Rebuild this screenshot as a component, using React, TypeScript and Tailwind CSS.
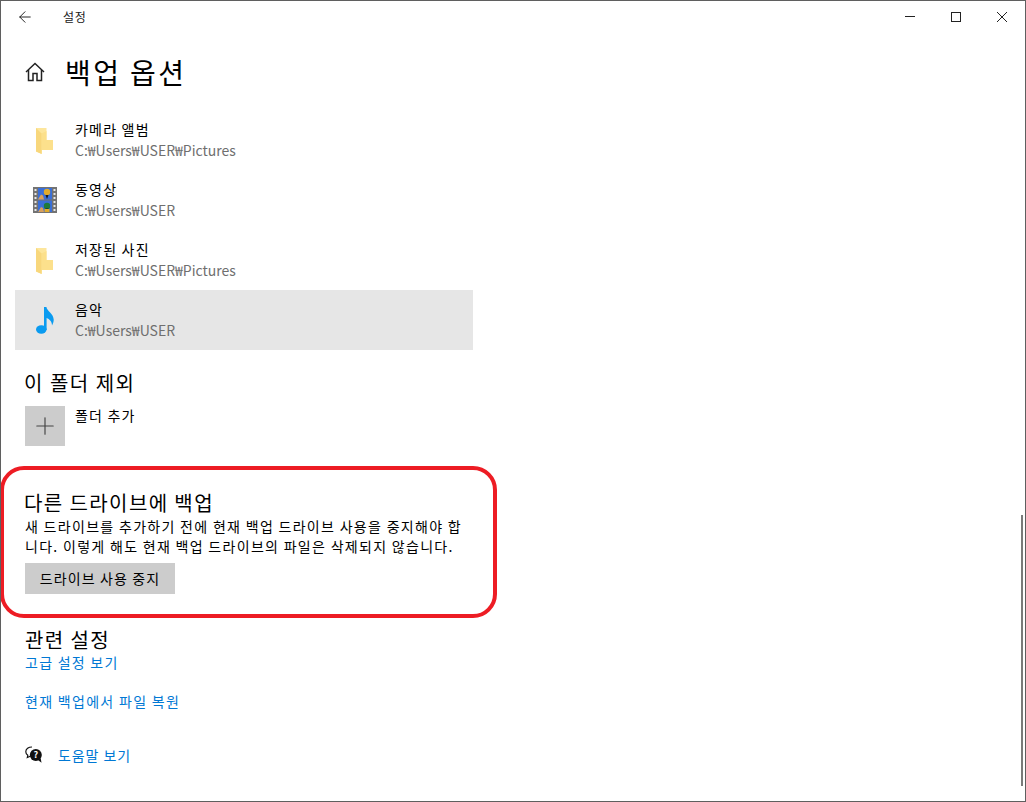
import { ArrowLeft, Plus } from "lucide-react";

const font = { fontFamily: '"Noto Sans CJK KR", "Noto Sans", sans-serif' };

function FolderIcon() {
  return (
    <svg className="mr-[2px] mt-[2px]" width="17" height="26" viewBox="0 0 17 26">
      <path d="M0 0h10.500v12H17v10H6v4l-6-2.500z" fill="#fde69c" />
      <path d="M5.500 5.500 10.500 3v9H17v10H5.500z" fill="#fce08c" />
      <path d="M0 0l5.500 5.500V26L0 23.500z" fill="#f8d77c" />
    </svg>
  );
}

function FilmIcon() {
  return (
    <svg width="24" height="26" viewBox="0 0 24 26">
      <rect x="0" y="0" width="24" height="26" fill="#737373" />
      <rect x="5" y="1" width="14" height="11.500" fill="#3a6fd8" />
      <rect x="5" y="13.500" width="14" height="11.500" fill="#3a6fd8" />
      <path d="M5 12.500l3-5 2 1 1 4z" fill="#d9a05c" />
      <path d="M5 25l3-5 2 1 1 4z" fill="#d9a05c" />
      <circle cx="14" cy="5" r="3.200" fill="#e2ab2a" />
      <circle cx="14" cy="19" r="3.200" fill="#1e7a3a" />
      <path d="M12.500 8l1.500 4 1.500-4zM12.500 21.500l1.500 3.500 1.500-3.500z" fill="#1a1a1a" />
      <rect x="11.500" y="22" width="5" height="3" fill="#e2ab2a" />
      {[2, 6, 10, 14, 18, 22].map((y) => (
        <g key={y}>
          <rect x="1.500" y={y} width="2" height="2" fill="#e8e8e8" />
          <rect x="20.500" y={y} width="2" height="2" fill="#e8e8e8" />
        </g>
      ))}
    </svg>
  );
}

function NoteIcon() {
  return (
    <svg width="18" height="27" viewBox="0 0 18 27">
      <ellipse cx="5.300" cy="22.500" rx="5.300" ry="4.200" fill="#0a9bf0" />
      <path d="M8 0h2.400c.5 4 7 6.500 7.300 12.500.1 2-.6 4-1.700 6 .2-3.500-2.500-6.500-5.400-7.500V23H8z" fill="#0a9bf0" />
    </svg>
  );
}

function HomeIcon() {
  return (
    <svg width="20" height="20" viewBox="0 0 20 20" fill="none" stroke="#222" strokeWidth="1.500">
      <path d="M1 10 10 1.500l9 8.500" />
      <path d="M3.500 8v10.500h4.500V11.500h4v7h4.500V8" />
    </svg>
  );
}

function HelpIcon() {
  return (
    <svg width="18" height="18" viewBox="0 0 18 18">
      <path d="M7 1C3.500 1 .8 3 .8 5.800c0 1.500.8 2.700 2 3.500L2.300 11.500l3-1.300" fill="none" stroke="#111" strokeWidth="1.200" />
      <circle cx="10.800" cy="9" r="6" fill="#111" />
      <path d="M13 14l3.500 2.800-.8-4.500z" fill="#111" />
      <text x="10.800" y="12" textAnchor="middle" fontSize="9" fontWeight="700" fill="#fff" style={font}>?</text>
    </svg>
  );
}

function Row({ icon, title, path, active }: { icon: React.ReactNode; title: string; path: string; active?: boolean }) {
  return (
    <div className={`flex h-[60px] w-[458px] ${active ? "bg-[#e6e6e6]" : ""}`}>
      <div className="flex w-[60px] shrink-0 items-center justify-center">{icon}</div>
      <div className="pt-[9px]">
        <div className="h-[21px] text-[14px] leading-[20px] tracking-[1.2px] text-black">{title}</div>
        <div className="h-[20px] text-[14px] leading-[20px] text-[#6f6f6f]">{path}</div>
      </div>
    </div>
  );
}

export default function App() {
  return (
    <div style={font} className="relative h-[802px] w-[1026px] overflow-hidden border border-[#5f5f5f] bg-white">
      {/* title bar */}
      <div className="flex h-[31px] items-center">
        <div className="flex w-[48px] justify-center">
          <ArrowLeft size={18} strokeWidth={1.2} color="#111" />
        </div>
        <div className="ml-[14px] pt-[1px] text-[12px] tracking-[0.6px] text-[#222]">설정</div>
        <div className="ml-auto flex items-center">
          <div className="flex w-[46px] justify-center">
            <div className="h-px w-[10px] bg-[#222]" />
          </div>
          <div className="flex w-[46px] justify-center">
            <div className="h-[10px] w-[10px] border border-[#222]" />
          </div>
          <div className="flex w-[46px] justify-center">
            <svg width="10" height="10" viewBox="0 0 10 10" stroke="#222" strokeWidth="1">
              <path d="M0 0l10 10M10 0L0 10" />
            </svg>
          </div>
        </div>
      </div>

      {/* page header */}
      <div className="flex h-[78px] items-center pb-[2px]">
        <div className="ml-[24px] flex w-[40px] pt-[4px]">
          <HomeIcon />
        </div>
        <h1 className="pt-[3px] text-[28px] font-normal leading-[40px] tracking-[2.4px] text-black">백업 옵션</h1>
      </div>

      <div className="pl-[14px]">
        <Row icon={<FolderIcon />} title="카메라 앨범" path="C:₩Users₩USER₩Pictures" />
        <Row icon={<FilmIcon />} title="동영상" path="C:₩Users₩USER" />
        <Row icon={<FolderIcon />} title="저장된 사진" path="C:₩Users₩USER₩Pictures" />
        <Row icon={<NoteIcon />} title="음악" path="C:₩Users₩USER" active />
      </div>

      <div className="pl-[24px]">
        <h2 className="mt-[18px] -ml-px h-[29px] text-[20px] font-normal leading-[30px] tracking-[1.5px] text-black">이 폴더 제외</h2>
        <div className="mt-[9px] flex h-[40px]">
          <div className="flex h-[40px] w-[40px] items-center justify-center bg-[#cccccc]">
            <Plus size={28} strokeWidth={1} color="#444" />
          </div>
          <div className="ml-[10px] -mt-px text-[14px] leading-[20px] tracking-[1.2px] text-black">폴더 추가</div>
        </div>

        <h2 className="mt-[42px] -ml-px h-[28px] text-[20px] font-normal leading-[30px] tracking-[1.4px] text-black">다른 드라이브에 백업</h2>
        <p className="w-[440px] text-[14px] leading-[20px] tracking-[1.3px] text-black">
          새 드라이브를 추가하기 전에 현재 백업 드라이브 사용을 중지해야 합니다. 이렇게 해도 현재 백업 드라이브의 파일은 삭제되지 않습니다.
        </p>
        <button className="mt-[7px] flex h-[31px] w-[150px] items-center justify-center bg-[#cccccc] text-[14px] tracking-[1.1px] text-black">
          드라이브 사용 중지
        </button>

        <h2 className="mt-[31px] h-[27px] text-[20px] font-normal leading-[30px] tracking-[1.4px] text-black">관련 설정</h2>
        <div className="h-[20px] text-[14px] leading-[20px] tracking-[1.25px] text-[#0078d4]">고급 설정 보기</div>
        <div className="mt-[19px] h-[20px] text-[14px] leading-[20px] tracking-[1.3px] text-[#0078d4]">현재 백업에서 파일 복원</div>
        <div className="mt-[34px] flex h-[20px] items-center">
          <HelpIcon />
          <span className="ml-[15px] text-[14px] leading-[20px] tracking-[0.9px] text-[#0078d4]">도움말 보기</span>
        </div>
      </div>

      {/* annotation and scrollbar sit over the page */}
      <div className="absolute -left-px top-[465px] h-[152px] w-[497px] rounded-[24px] border-[4px] border-[#ed1c24]" />
      <div className="absolute right-[2px] top-[514px] h-[271px] w-[2px] bg-[#7a7a7a]" />
    </div>
  );
}
